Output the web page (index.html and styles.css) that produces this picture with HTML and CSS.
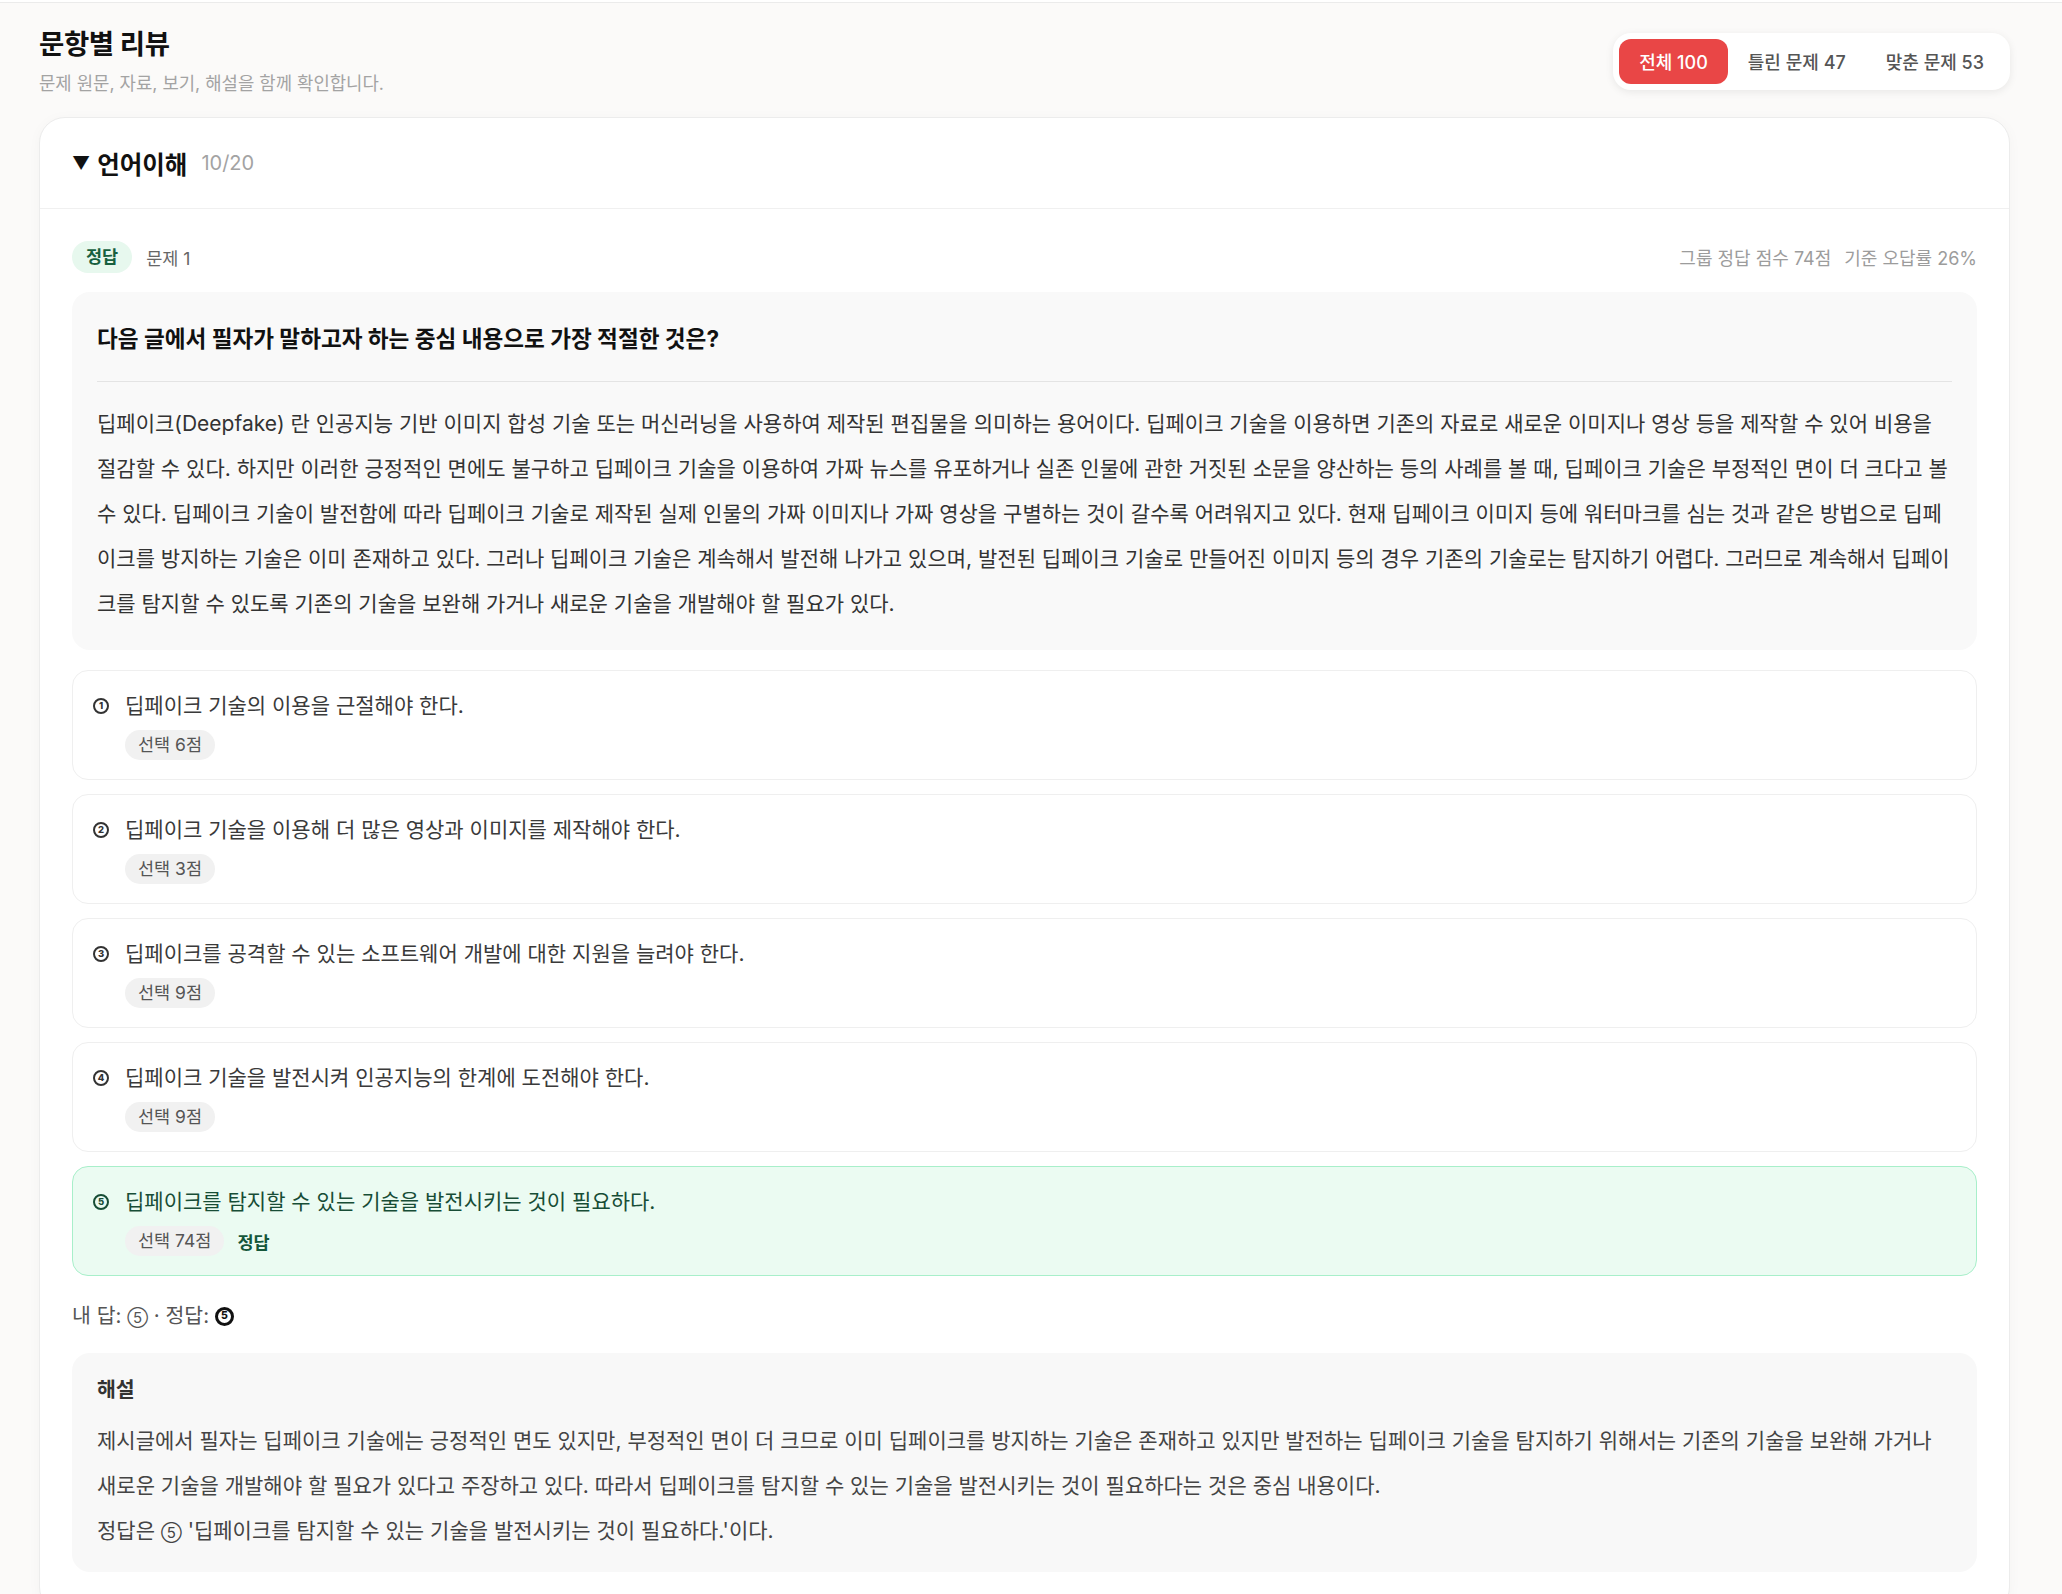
FILE: index.html
```html
<!DOCTYPE html>
<html lang="ko">
<head>
    <meta charset="UTF-8">
    <title>문항별 리뷰</title>
    <link rel="stylesheet" href="styles.css">
</head>
<body>
    <div class="page">
        <div class="page-head">
            <div>
                <h1 class="page-title">문항별 리뷰</h1>
                <p class="page-sub">문제 원문, 자료, 보기, 해설을 함께 확인합니다.</p>
            </div>
            <div class="filter">
                <button class="filter-btn active">전체 100</button>
                <button class="filter-btn">틀린 문제 47</button>
                <button class="filter-btn">맞춘 문제 53</button>
            </div>
        </div>

        <div class="group-card">
            <div class="group-head">
                <span class="caret">▼</span>
                <span class="group-name">언어이해</span>
                <span class="group-count">10/20</span>
            </div>

            <div class="question">
                <div class="q-meta">
                    <div class="q-meta-left">
                        <span class="tag-correct">정답</span>
                        <span class="q-no">문제 1</span>
                    </div>
                    <div class="q-meta-right">
                        <span>그룹 정답 점수 74점</span>
                        <span>기준 오답률 26%</span>
                    </div>
                </div>

                <div class="q-box">
                    <h2 class="q-title">다음 글에서 필자가 말하고자 하는 중심 내용으로 가장 적절한 것은?</h2>
                    <p class="q-passage">딥페이크(Deepfake) 란 인공지능 기반 이미지 합성 기술 또는 머신러닝을 사용하여 제작된 편집물을 의미하는 용어이다. 딥페이크 기술을 이용하면 기존의 자료로 새로운 이미지나 영상 등을 제작할 수 있어 비용을 절감할 수 있다. 하지만 이러한 긍정적인 면에도 불구하고 딥페이크 기술을 이용하여 가짜 뉴스를 유포하거나 실존 인물에 관한 거짓된 소문을 양산하는 등의 사례를 볼 때, 딥페이크 기술은 부정적인 면이 더 크다고 볼 수 있다. 딥페이크 기술이 발전함에 따라 딥페이크 기술로 제작된 실제 인물의 가짜 이미지나 가짜 영상을 구별하는 것이 갈수록 어려워지고 있다. 현재 딥페이크 이미지 등에 워터마크를 심는 것과 같은 방법으로 딥페이크를 방지하는 기술은 이미 존재하고 있다. 그러나 딥페이크 기술은 계속해서 발전해 나가고 있으며, 발전된 딥페이크 기술로 만들어진 이미지 등의 경우 기존의 기술로는 탐지하기 어렵다. 그러므로 계속해서 딥페이크를 탐지할 수 있도록 기존의 기술을 보완해 가거나 새로운 기술을 개발해야 할 필요가 있다.</p>
                </div>

                <ul class="choices">
                    <li class="choice">
                        <span class="choice-num">1</span>
                        <div class="choice-body">
                            <div class="choice-text">딥페이크 기술의 이용을 근절해야 한다.</div>
                            <div class="choice-stats"><span class="pick">선택 6점</span></div>
                        </div>
                    </li>
                    <li class="choice">
                        <span class="choice-num">2</span>
                        <div class="choice-body">
                            <div class="choice-text">딥페이크 기술을 이용해 더 많은 영상과 이미지를 제작해야 한다.</div>
                            <div class="choice-stats"><span class="pick">선택 3점</span></div>
                        </div>
                    </li>
                    <li class="choice">
                        <span class="choice-num">3</span>
                        <div class="choice-body">
                            <div class="choice-text">딥페이크를 공격할 수 있는 소프트웨어 개발에 대한 지원을 늘려야 한다.</div>
                            <div class="choice-stats"><span class="pick">선택 9점</span></div>
                        </div>
                    </li>
                    <li class="choice">
                        <span class="choice-num">4</span>
                        <div class="choice-body">
                            <div class="choice-text">딥페이크 기술을 발전시켜 인공지능의 한계에 도전해야 한다.</div>
                            <div class="choice-stats"><span class="pick">선택 9점</span></div>
                        </div>
                    </li>
                    <li class="choice is-answer">
                        <span class="choice-num">5</span>
                        <div class="choice-body">
                            <div class="choice-text">딥페이크를 탐지할 수 있는 기술을 발전시키는 것이 필요하다.</div>
                            <div class="choice-stats"><span class="pick">선택 74점</span><span class="answer-mark">정답</span></div>
                        </div>
                    </li>
                </ul>

                <p class="my-answer">내 답: <span class="circ">⑤</span> · 정답: <span class="answer-dot">5</span></p>

                <div class="explain">
                    <h3 class="explain-title">해설</h3>
                    <p class="explain-text">제시글에서 필자는 딥페이크 기술에는 긍정적인 면도 있지만, 부정적인 면이 더 크므로 이미 딥페이크를 방지하는 기술은 존재하고 있지만 발전하는 딥페이크 기술을 탐지하기 위해서는 기존의 기술을 보완해 가거나 새로운 기술을 개발해야 할 필요가 있다고 주장하고 있다. 따라서 딥페이크를 탐지할 수 있는 기술을 발전시키는 것이 필요하다는 것은 중심 내용이다.</p>
                    <p class="explain-text">정답은 <span class="circ">⑤</span> '딥페이크를 탐지할 수 있는 기술을 발전시키는 것이 필요하다.'이다.</p>
                </div>
            </div>
        </div>
    </div>
</body>
</html>
```

FILE: styles.css
```css
html {
    background-color: #ffffff;
}

body {
    margin: 2px 0 0 0;
    border-top: 1px solid #ebebeb;
    background-color: #fbfaf9;
    font-family: Inter, "Noto Sans CJK KR", sans-serif;
    color: #222;
    min-height: 1591px;
}

.page {
    padding: 23px 52px 0 39px;
}

/* 상단 제목 + 필터 */
.page-head {
    display: flex;
    align-items: center;
    justify-content: space-between;
    margin-bottom: 21px;
}

.page-title {
    margin: 0;
    font-size: 27.5px;
    line-height: 36px;
    font-weight: 700;
    color: #111;
    letter-spacing: -0.4px;
}

.page-sub {
    margin: 10px 0 0 0;
    font-size: 17.8px;
    line-height: 24px;
    color: #a3a3a3;
}

.filter {
    display: flex;
    padding: 6px;
    background-color: #ffffff;
    border-radius: 18px;
    box-shadow: 0 2px 8px rgba(0, 0, 0, 0.08);
}

.filter-btn {
    border: none;
    background: none;
    padding: 0 20px;
    height: 45px;
    border-radius: 12px;
    font-family: inherit;
    font-size: 18px;
    font-weight: 500;
    color: #555;
    cursor: pointer;
}

.filter-btn.active {
    background-color: #e94646;
    color: #ffffff;
}

/* 그룹 카드 */
.group-card {
    background-color: #ffffff;
    border: 1px solid #ececec;
    border-radius: 26px;
    box-shadow: 0 2px 14px rgba(0, 0, 0, 0.03);
}

.group-head {
    display: flex;
    align-items: center;
    height: 90px;
    padding: 0 32px;
    border-bottom: 1px solid #f0f0f0;
}

.caret {
    font-size: 18px;
    color: #111;
    margin-right: 7px;
}

.group-name {
    font-size: 24.5px;
    font-weight: 700;
    color: #111;
}

.group-count {
    margin-left: 14px;
    font-size: 20px;
    color: #a3a3a3;
}

.question {
    padding: 32px 32px 40px 32px;
}

.q-meta {
    display: flex;
    align-items: center;
    justify-content: space-between;
    margin-bottom: 19px;
}

.q-meta-left {
    display: flex;
    align-items: center;
    gap: 14px;
}

.tag-correct {
    display: inline-block;
    height: 32px;
    line-height: 32px;
    padding: 0 14px;
    border-radius: 16px;
    background-color: #e7f8ee;
    color: #17603f;
    font-size: 17.5px;
    font-weight: 700;
}

.q-no {
    font-size: 17.5px;
    color: #666;
}

.q-meta-right {
    display: flex;
    gap: 13px;
    font-size: 18px;
    color: #9c9c9c;
}

/* 문제 본문 */
.q-box {
    padding: 30px 25px 24px 25px;
    border-radius: 18px;
    background-color: #f9f9f9;
    margin-bottom: 20px;
}

.q-title {
    margin: 0;
    padding-bottom: 26px;
    border-bottom: 1px solid #e4e4e4;
    font-size: 22.6px;
    line-height: 33px;
    font-weight: 700;
    color: #111;
}

.q-passage {
    margin: 19px 0 0 0;
    font-size: 21px;
    line-height: 45px;
    color: #333;
}

/* 선택지 */
.choices {
    list-style: none;
    margin: 0;
    padding: 0;
    display: flex;
    flex-direction: column;
    gap: 14px;
}

.choice {
    display: grid;
    grid-template-columns: 16px 1fr;
    gap: 16px;
    padding: 19px 20px;
    border: 1px solid #efefef;
    border-radius: 16px;
    background-color: #ffffff;
}

/* 동그라미 번호 */
.choice-num {
    box-sizing: border-box;
    width: 16px;
    height: 16px;
    margin-top: 8px;
    border: 2px solid #333;
    border-radius: 50%;
    display: flex;
    align-items: center;
    justify-content: center;
    font-size: 9.5px;
    line-height: 1;
    font-weight: 800;
    color: #333;
}

.choice-text {
    font-size: 21px;
    line-height: 32px;
    color: #3a3a3a;
}

.choice-stats {
    display: flex;
    align-items: center;
    gap: 13px;
    margin-top: 8px;
}

.pick {
    display: inline-block;
    height: 30px;
    line-height: 30px;
    padding: 0 13px;
    border-radius: 16px;
    background-color: #f1f1f1;
    font-size: 17.5px;
    color: #555;
}

.choice.is-answer {
    background-color: #ebfbf2;
    border-color: #a8efca;
}

.choice.is-answer .choice-text {
    color: #174d36;
}

.choice.is-answer .choice-num {
    color: #174d36;
    border-color: #174d36;
}

.answer-mark {
    font-size: 17.5px;
    font-weight: 700;
    color: #14573a;
}

.my-answer {
    margin: 25px 0 0 0;
    font-size: 20.5px;
    line-height: 30px;
    color: #555;
}

.circ {
    font-size: 15px;
}

/* 정답 번호: 검은 링 */
.answer-dot {
    box-sizing: border-box;
    display: inline-flex;
    align-items: center;
    justify-content: center;
    width: 19px;
    height: 19px;
    border: 3px solid #111;
    border-radius: 50%;
    font-size: 10.5px;
    line-height: 1;
    font-weight: 800;
    color: #111;
    vertical-align: 4px;
}

/* 해설 */
.explain {
    margin-top: 20px;
    padding: 22px 25px 17px 25px;
    border-radius: 18px;
    background-color: #f8f8f8;
}

.explain-title {
    margin: 0 0 13px 0;
    font-size: 20.5px;
    line-height: 30px;
    font-weight: 700;
    color: #333;
}

.explain-text {
    margin: 0;
    font-size: 21px;
    line-height: 45px;
    color: #444;
}
```
